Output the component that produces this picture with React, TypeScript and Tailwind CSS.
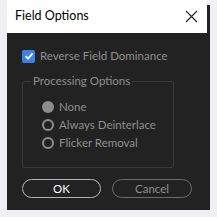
import React from 'react';

function Radio({ checked, label }: { checked?: boolean; label: string }) {
    return (
        <div className="flex items-center gap-[5px] h-[18px]">
            {checked ? (
                <span className="w-[12px] h-[12px] rounded-full bg-[#8c8c8c]" />
            ) : (
                <span className="w-[12px] h-[12px] rounded-full border-2 border-[#8c8c8c]" />
            )}
            <span className="text-[11.5px] text-[#8f8f8f] leading-none">{label}</span>
        </div>
    );
}

export default function App() {
    return (
        <div
            className="w-[217px] h-[217px] bg-[#f0f0f2] pl-[7px]"
            style={{ fontFamily: 'Lato, "Noto Sans", sans-serif' }}
        >
            <div className="w-[203px] h-[210px] bg-[#222222] flex flex-col">
                <div className="flex h-[33px]">
                    <div className="w-[200px] bg-white flex items-center justify-between pl-[8px] pr-[9px]">
                        <span className="text-[12.5px] text-black">Field Options</span>
                        <svg width="13" height="13" viewBox="0 0 13 13">
                            <path d="M1 1 L12 12 M12 1 L1 12" stroke="#222" strokeWidth="1.1" />
                        </svg>
                    </div>
                    <div className="flex-1 flex flex-col">
                        <div className="h-[5px] bg-[#f0f0f2]" />
                        <div className="flex-1 bg-[#222222]" />
                    </div>
                </div>

                <div className="pl-[15px] pt-[15px] h-[31px] flex items-center gap-[5px]">
                    <span className="w-[13px] h-[13px] rounded-[2px] bg-[#3b82e4] flex items-center justify-center">
                        <svg width="10" height="10" viewBox="0 0 10 10">
                            <path d="M1.5 5.2 L4 7.6 L8.6 2.4" stroke="#ffffff" strokeWidth="1.8" fill="none" />
                        </svg>
                    </span>
                    <span className="text-[11.5px] leading-[16px] text-[#8f8f8f]">Reverse Field Dominance</span>
                </div>

                <div className="relative ml-[15px] mt-[17px] w-[152px] h-[87px] border border-[#383838] rounded-[2px]">
                    <span className="absolute left-[8px] top-[-9px] px-[2px] bg-[#222222] text-[11.5px] leading-[16px] text-[#8f8f8f]">
                        Processing Options
                    </span>
                    <div className="pl-[19px] pt-[16px] flex flex-col">
                        <Radio checked label="None" />
                        <Radio label="Always Deinterlace" />
                        <Radio label="Flicker Removal" />
                    </div>
                </div>

                <div className="flex gap-[11px] pl-[15px] mt-[11px]">
                    <button className="w-[79px] h-[19px] rounded-full border border-[#b5b5b5] text-[11.5px] text-white leading-none">
                        OK
                    </button>
                    <button className="w-[80px] h-[19px] rounded-full border border-[#6a6a6a] text-[11.5px] text-[#8f8f8f] leading-none">
                        Cancel
                    </button>
                </div>
            </div>
        </div>
    );
}
